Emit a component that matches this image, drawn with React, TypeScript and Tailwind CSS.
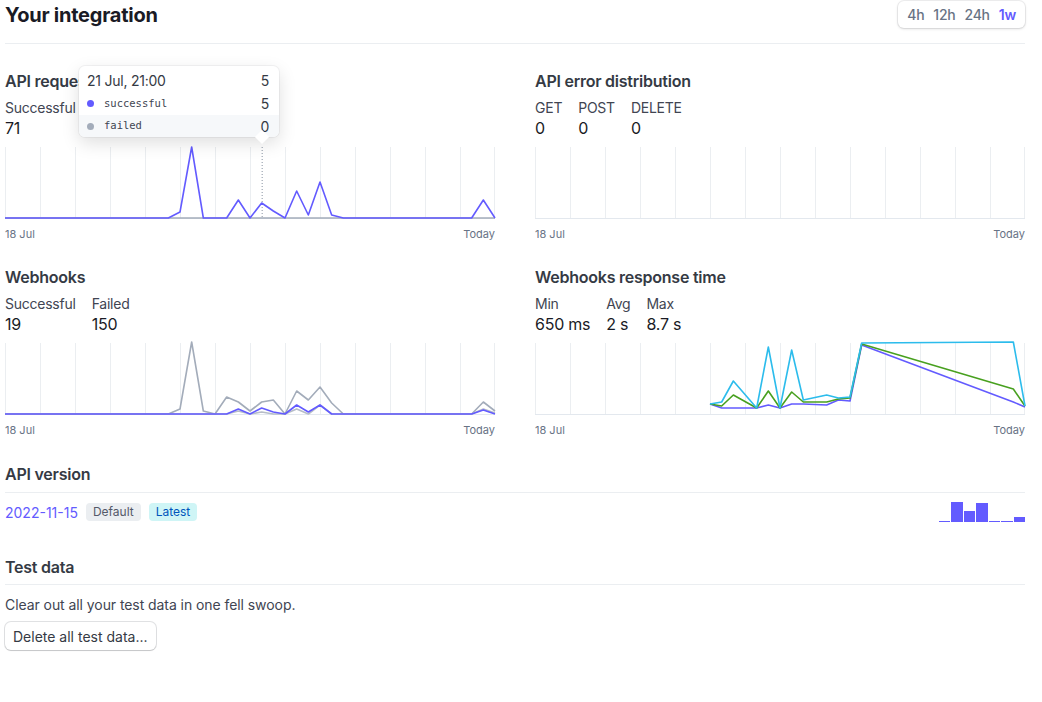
import React from "react";

type Point = [number, number]; // [slot index, height in px above baseline]

interface Series {
  color: string;
  points: Point[];
}

const CHART_W = 490;
const CHART_H = 72;
const STEP = CHART_W / 42;

// Fill a full 43-slot series with zeros, then apply overrides
const fullSeries = (overrides: Record<number, number>): Point[] =>
  Array.from({ length: 43 }, (_, i) => [i, overrides[i] ?? 0] as Point);

const apiSuccessful = fullSeries({
  15: 6, 16: 71, 20: 18, 22: 15, 23: 7, 25: 27, 26: 3, 27: 36, 28: 3, 41: 18,
});
const apiFailed = fullSeries({});

const hooksTotal = fullSeries({
  15: 5, 16: 72, 17: 3, 19: 17, 20: 12, 21: 3, 22: 12, 23: 14, 25: 23, 26: 14,
  27: 27, 28: 11, 41: 12, 42: 3,
});
const hooksFailed = fullSeries({ 20: 3, 22: 2, 25: 5, 27: 9, 41: 5, 42: 1 });
const hooksSuccessful = fullSeries({
  20: 5, 22: 6, 23: 2, 25: 9, 26: 2, 27: 9, 41: 4,
});

const respMax: Point[] = [
  [15, 10], [16, 12], [17, 33], [19, 6], [20, 67], [21, 6], [22, 64], [23, 14],
  [25, 19], [26, 16], [27, 17], [28, 71], [41, 72], [42, 8],
];
const respAvg: Point[] = [
  [15, 10], [16, 8], [17, 19], [19, 6], [20, 23], [21, 6], [22, 22], [23, 12],
  [25, 12], [26, 15], [27, 16], [28, 70], [41, 25], [42, 8],
];
const respMin: Point[] = [
  [15, 10], [16, 6], [17, 6], [19, 6], [20, 9], [21, 6], [22, 10], [23, 10],
  [25, 9], [26, 14], [27, 13], [28, 69], [41, 12], [42, 7],
];

const versionBars = [1.5, 20, 11, 19, 1.5, 1.5, 5];

function Chart({ series, cursor }: { series: Series[]; cursor?: number }) {
  return (
    <div className="mt-[9px]">
      <svg width={CHART_W} height={CHART_H} className="block overflow-visible">
        {Array.from({ length: 15 }).map((_, i) => {
          const x = Math.min(i * 35 + 0.5, CHART_W - 0.5);
          return (
            <line
              key={i}
              x1={x}
              x2={x}
              y1={0}
              y2={CHART_H}
              stroke="#ebeef1"
              strokeWidth={1}
            />
          );
        })}
        <line
          x1={0}
          x2={CHART_W}
          y1={CHART_H - 0.5}
          y2={CHART_H - 0.5}
          stroke="#e3e8ee"
          strokeWidth={1}
        />
        {cursor !== undefined && (
          <line
            x1={cursor * STEP + 0.5}
            x2={cursor * STEP + 0.5}
            y1={0}
            y2={CHART_H}
            stroke="#8792a2"
            strokeWidth={1}
            strokeDasharray="1 2"
          />
        )}
        {series.map((s, idx) => (
          <polyline
            key={idx}
            fill="none"
            stroke={s.color}
            strokeWidth={1.6}
            strokeLinejoin="round"
            points={s.points
              .map(([i, v]) => `${(i * STEP).toFixed(2)},${(CHART_H - 1 - v).toFixed(2)}`)
              .join(" ")}
          />
        ))}
      </svg>
      <div className="mt-[7px] flex justify-between text-[11px] leading-4 tracking-normal text-[#687385]">
        <span>18 Jul</span>
        <span>Today</span>
      </div>
    </div>
  );
}

function Stats({ items }: { items: { label: string; value: string }[] }) {
  return (
    <div className="mt-[5px] flex gap-4">
      {items.map((item) => (
        <div key={item.label} className="flex flex-col">
          <span className="text-[14px] leading-5 text-[#414552]">{item.label}</span>
          <span className="text-[16px] leading-5 text-[#1a1b25]">{item.value}</span>
        </div>
      ))}
    </div>
  );
}

function Tooltip() {
  return (
    <div className="absolute left-[74px] top-[-3px] w-[200px] rounded-md bg-white shadow-[0_6px_18px_rgba(0,0,0,0.13),0_0_0_1px_rgba(60,66,87,0.06)]">
      <div className="flex h-[26px] items-center justify-between pl-2 pr-[10px] pt-[3px] text-[14px] text-[#353a44]">
        <span>21 Jul, 21:00</span>
        <span>5</span>
      </div>
      <div className="flex h-[23px] items-center justify-between pl-2 pr-[10px]">
        <div className="flex items-center gap-[10px]">
          <span className="h-[7px] w-[7px] rounded-full bg-[#635bff]" />
          <span className="font-['DejaVu_Sans_Mono',monospace] text-[10.5px] tracking-normal text-[#414552]">
            successful
          </span>
        </div>
        <span className="text-[14px] text-[#353a44]">5</span>
      </div>
      <div className="flex h-[22px] items-center justify-between rounded-b-md bg-[#f6f8fa] pl-2 pr-[10px]">
        <div className="flex items-center gap-[10px]">
          <span className="h-[7px] w-[7px] rounded-full bg-[#a3acba]" />
          <span className="font-['DejaVu_Sans_Mono',monospace] text-[10.5px] tracking-normal text-[#414552]">
            failed
          </span>
        </div>
        <span className="text-[14px] text-[#353a44]">0</span>
      </div>
      {/* pointer */}
      <div className="absolute bottom-[-5px] left-[178px] h-[10px] w-[10px] rotate-45 bg-white" />
    </div>
  );
}

function SectionTitle({ children }: { children: React.ReactNode }) {
  return (
    <h2 className="text-[16px] font-semibold leading-6 text-[#353a44]">{children}</h2>
  );
}

export default function App() {
  return (
    <div className="h-[702px] w-[1042px] bg-white font-['Inter','Noto_Sans',sans-serif] tracking-[-0.015em]">
      <div className="ml-[5px] w-[1020px]">
        {/* Header */}
        <div className="flex h-[44px] items-start justify-between border-b border-[#ebeef1]">
          <h1 className="text-[20px] font-bold leading-[30px] text-[#1a1b25]">
            Your integration
          </h1>
          <div className="mt-[1px] flex h-[27px] items-center gap-[9px] rounded-md bg-white px-[9px] text-[14px] font-medium shadow-[0_1px_3px_rgba(0,0,0,0.14),0_0_0_1px_rgba(64,68,82,0.08)]">
            <span className="text-[#687385]">4h</span>
            <span className="text-[#687385]">12h</span>
            <span className="text-[#687385]">24h</span>
            <span className="font-semibold text-[#635bff]">1w</span>
          </div>
        </div>

        {/* Charts */}
        <div className="mt-[25px] grid grid-cols-2 gap-x-[40px] gap-y-[23px]">
          <div className="relative">
            <SectionTitle>API requests</SectionTitle>
            <Stats items={[{ label: "Successful", value: "71" }]} />
            <Chart
              cursor={22}
              series={[
                { color: "#a3acba", points: apiFailed },
                { color: "#635bff", points: apiSuccessful },
              ]}
            />
            <Tooltip />
          </div>

          <div>
            <SectionTitle>API error distribution</SectionTitle>
            <Stats
              items={[
                { label: "GET", value: "0" },
                { label: "POST", value: "0" },
                { label: "DELETE", value: "0" },
              ]}
            />
            <Chart series={[]} />
          </div>

          <div>
            <SectionTitle>Webhooks</SectionTitle>
            <Stats
              items={[
                { label: "Successful", value: "19" },
                { label: "Failed", value: "150" },
              ]}
            />
            <Chart
              series={[
                { color: "#a3acba", points: hooksTotal },
                { color: "#b6bdc8", points: hooksFailed },
                { color: "#635bff", points: hooksSuccessful },
              ]}
            />
          </div>

          <div>
            <SectionTitle>Webhooks response time</SectionTitle>
            <Stats
              items={[
                { label: "Min", value: "650 ms" },
                { label: "Avg", value: "2 s" },
                { label: "Max", value: "8.7 s" },
              ]}
            />
            <Chart
              series={[
                { color: "#635bff", points: respMin },
                { color: "#48a01f", points: respAvg },
                { color: "#2cbcec", points: respMax },
              ]}
            />
          </div>
        </div>

        {/* API version */}
        <div className="mt-[24px]">
          <div className="border-b border-[#ebeef1] pb-[6px]">
            <SectionTitle>API version</SectionTitle>
          </div>
          <div className="mt-[9px] flex h-[20px] items-center justify-between">
            <div className="flex items-center gap-2">
              <span className="text-[14px] tracking-normal text-[#635bff]">2022-11-15</span>
              <span className="rounded-[4px] bg-[#ebeef1] px-[7px] text-[12px] leading-[18px] tracking-normal text-[#545969]">
                Default
              </span>
              <span className="rounded-[4px] bg-[#cff5f6] px-[7px] text-[12px] leading-[18px] tracking-normal text-[#0055bc]">
                Latest
              </span>
            </div>
            <div className="flex h-[20px] items-end gap-[1px]">
              {versionBars.map((h, i) => (
                <div key={i} className="w-[11.5px] bg-[#635bff]" style={{ height: h }} />
              ))}
            </div>
          </div>
        </div>

        {/* Test data */}
        <div className="mt-[33px]">
          <div className="border-b border-[#ebeef1] pb-[5px]">
            <SectionTitle>Test data</SectionTitle>
          </div>
          <p className="mt-[10px] text-[14px] leading-5 tracking-[-0.005em] text-[#414552]">
            Clear out all your test data in one fell swoop.
          </p>
          <button
            type="button"
            className="mt-[7px] h-[28px] rounded-md bg-white px-2 text-[14px] tracking-normal text-[#353a44] shadow-[0_1px_1px_rgba(0,0,0,0.12),0_0_0_1px_rgba(64,68,82,0.16)]"
          >
            Delete all test data...
          </button>
        </div>
      </div>
    </div>
  );
}
